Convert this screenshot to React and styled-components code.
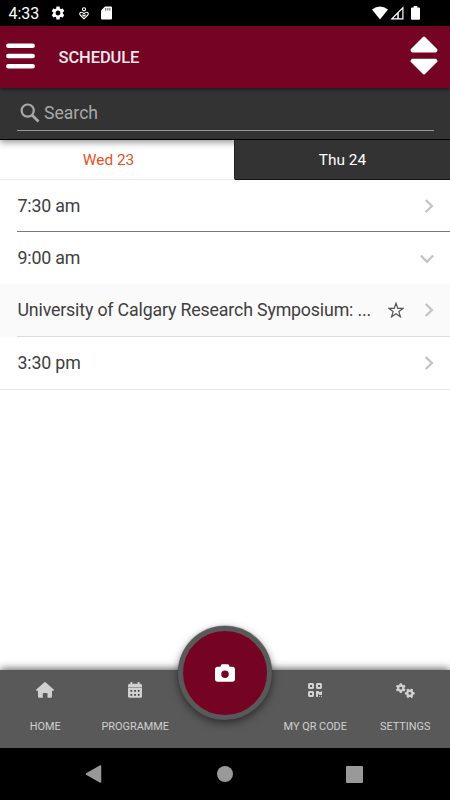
import React from 'react';
import styled, { createGlobalStyle, css } from 'styled-components';
import { FaQrcode, FaGears, FaCamera } from 'react-icons/fa6';
import { MdSettings } from 'react-icons/md';

const GlobalStyle = createGlobalStyle`
    * {
        box-sizing: border-box;
    }
    body {
        margin: 0;
        background-color: white;
        font-family: Roboto, sans-serif;
    }
    svg {
        display: block;
        flex-shrink: 0;
    }
`
const Screen = styled.div`
    width: 450px;
    height: 800px;
    display: flex;
    flex-direction: column;
    overflow: hidden;
    background-color: white;
`
const StatusBar = styled.div`
    height: 26px;
    flex-shrink: 0;
    display: flex;
    align-items: center;
    padding: 0 30px 0 8.5px;
    background-color: black;
    color: white;
`
const Clock = styled.span`
    width: 41.5px;
    font-size: 16px;
    line-height: 26px;
    padding-top: 1px;
`
const StatusIcons = styled.div`
    display: flex;
    align-items: center;
    gap: ${(props) => props.$gap}px;
    margin-left: ${(props) => (props.$end ? 'auto' : '0')};
`
const Header = styled.header`
    position: relative;
    z-index: 3;
    height: 62px;
    flex-shrink: 0;
    display: flex;
    align-items: center;
    padding: 0 12.5px 2px 6px;
    background-color: #750324;
    box-shadow: 0 1px 4px rgba(0, 0, 0, 0.6);
`
const Title = styled.h1`
    flex: 1;
    margin: 2px 0 0 23.5px;
    font-size: 16.5px;
    font-weight: 500;
    letter-spacing: -0.1px;
    color: #f3e8eb;
`
const SearchBar = styled.div`
    position: relative;
    z-index: 2;
    height: 52px;
    flex-shrink: 0;
    padding: 8px 16px 0 17px;
    background-color: #333333;
    border-bottom: 1px solid black;
    box-shadow: 0 2px 7px rgba(0, 0, 0, 0.45);
`
const SearchField = styled.div`
    height: 35px;
    display: flex;
    align-items: center;
    gap: 4px;
    padding: 0 0 1px 3px;
    border-bottom: 1px solid #999999;
    font-size: 17.6px;
    color: #a9a9a9;
`
const Tabs = styled.div`
    height: 40px;
    flex-shrink: 0;
    display: flex;
    border-bottom: 1px solid #ededed;
`
const Tab = styled.div`
    height: 40px;
    display: flex;
    align-items: center;
    justify-content: center;
    font-size: 15.4px;
    ${(props) => props.$active ? css`
        position: relative;
        z-index: 2;
        flex: 1;
        background-color: #333333;
        border-bottom: 1px solid #111111;
        border-left: 1px solid #222222;
        border-radius: 0 0 0 2px;
        color: white;
    ` : css`
        width: 234px;
        padding-right: 17px;
        color: #e9501f;
    `}
`
const List = styled.div`
    flex: 1;
`
const Row = styled.div`
    height: ${(props) => props.$height}px;
    padding-left: 17px;
    background-color: ${(props) => (props.$shaded ? '#fafafa' : 'white')};
    border-bottom: ${(props) => (props.$last ? '1px solid #e6e6e6' : 'none')};
`
const RowInner = styled.div`
    height: 100%;
    display: flex;
    align-items: center;
    padding-right: ${(props) => (props.$open ? 15 : 16)}px;
    border-bottom: ${(props) => (props.$line ? `1px solid ${props.$line}` : 'none')};
`
const RowText = styled.span`
    flex: 1;
    padding: 0 0 1px 0.5px;
    white-space: nowrap;
    font-size: 17.8px;
    letter-spacing: -0.17px;
    color: #404040;
`
const StarSlot = styled.span`
    margin-right: 20px;
`
const Footer = styled.nav`
    position: relative;
    height: 78px;
    flex-shrink: 0;
    display: grid;
    grid-template-columns: repeat(5, 90px);
    background-color: #595959;
    box-shadow: 0 -1px 8px rgba(0, 0, 0, 0.65);
`
const FooterItem = styled.div`
    display: flex;
    flex-direction: column;
    align-items: center;
    padding: 11px 0 0 0;
    color: #d0d0d0;
`
const FooterIcon = styled.div`
    height: 18px;
    display: flex;
    align-items: center;
`
const FooterLabel = styled.span`
    margin-top: 21px;
    padding-left: 0.5px;
    font-size: 10.9px;
    line-height: 14px;
    white-space: nowrap;
`
const CameraButton = styled.div`
    position: absolute;
    left: 178px;
    top: -44px;
    width: 94px;
    height: 94px;
    display: flex;
    align-items: center;
    justify-content: center;
    border: 5px solid #595959;
    border-radius: 50%;
    background-color: #750324;
    color: white;
    box-shadow: 0 3px 9px rgba(0, 0, 0, 0.5), 0 -0.5px 1px rgba(0, 0, 0, 0.4);
`
const SystemNav = styled.div`
    position: relative;
    height: 52px;
    flex-shrink: 0;
    display: flex;
    justify-content: space-between;
    align-items: center;
    padding: 0 87px 0 85px;
    background-color: black;
`

const CareIcon = () => (
    <svg width="10" height="13" viewBox="0 0 10 13" fill="none" stroke="white" strokeWidth="1.1">
        <circle cx="5" cy="2.3" r="1.6" />
        <path d="M5 11.8 1.2 8C.1 6.800 1 5.200 2.400 5.300 3.700 5.300 4.300 6 5 6.900c.7-.9 1.300-1.600 2.600-1.600 1.400-.1 2.300 1.500 1.200 2.700z" />
        <path d="M3.300 7.600 5 9.300l1.700-1.700" />
    </svg>
)

const SdCardIcon = () => (
    <svg width="11" height="14" viewBox="0 0 11 14">
        <path d="M4 .5h6q1 0 1 1v11q0 1-1 1H1q-1 0-1-1V4.500z" fill="white" />
        <path d="M4.700 2v2.600M6.800 2v2.600M8.900 2v2.600" stroke="#555555" strokeWidth="1" />
    </svg>
)

const WifiIcon = () => (
    <svg width="16" height="14" viewBox="0 0 16 14">
        <path d="M0 3.600Q8-2.800 16 3.600L8 13.500z" fill="white" />
    </svg>
)

const SignalIcon = () => (
    <svg width="14" height="14" viewBox="0 0 14 14">
        <path d="M13.500.3v13.200H.3z" fill="white" />
        <path d="M7.300 8.300v4H3.300z" fill="black" />
        <path d="M8.800 6.800 12.300 3.300v9H8.800z" fill="black" />
    </svg>
)

const BatteryIcon = () => (
    <svg width="9" height="14" viewBox="0 0 9 14">
        <path d="M2.700 0h3.600v1.600H8q1 0 1 1v10.200q0 1-1 1H1q-1 0-1-1V2.600q0-1 1-1h1.700z" fill="white" />
    </svg>
)

const MenuIcon = () => (
    <svg width="29" height="26" viewBox="0 0 29 26" stroke="white" strokeWidth="4.400" strokeLinecap="round">
        <path d="M2.300 2.700h24.400M2.300 13h24.400M2.300 23.300h24.400" />
    </svg>
)

const SortIcon = () => (
    <svg width="28" height="40" viewBox="0 0 28 40" fill="white" stroke="white" strokeWidth="3" strokeLinejoin="round">
        <path d="M14 2 26 14 25.500 15H2.500L2 14z" />
        <path d="M14 37 26 25 25.500 24.200H2.500L2 25z" />
    </svg>
)

const SearchIcon = () => (
    <svg width="20" height="20" viewBox="0 0 20 20" fill="none" stroke="#a9a9a9">
        <circle cx="7.700" cy="7.600" r="6.100" strokeWidth="2.200" />
        <path d="m12.200 12.200 6.300 6.300" strokeWidth="2.700" />
    </svg>
)

const ChevronRight = () => (
    <svg width="10" height="16" viewBox="0 0 10 16" fill="none" stroke="#c4c4c8" strokeWidth="2.400">
        <path d="m1.700 2 6.200 6-6.200 6" />
    </svg>
)

const ChevronDown = () => (
    <svg width="16" height="16" viewBox="0 0 16 16" fill="none" stroke="#c4c4c8" strokeWidth="2.400">
        <path d="m1.800 5.500 6.200 6.300 6.200-6.300" />
    </svg>
)

const StarIcon = () => (
    <svg width="16" height="16" viewBox="0 0 16 16" fill="none" stroke="#555555" strokeWidth="1.200">
        <path d="m8 1.200 1.800 5.100h5.400l-4.300 3.300 1.500 5.200L8 11.700l-4.400 3.100 1.500-5.200L.8 6.300h5.400z" />
    </svg>
)

const HomeIcon = () => (
    <svg width="18" height="16" viewBox="0 0 18 16" fill="currentColor">
        <path d="M9 0q.5 0 .9.400l7.800 7.100q.5.500.2.900-.2.400-.7.400H16v5.700q0 1.200-1.200 1.200h-3.300v-4q0-.8-.8-.8H7.600q-.8 0-.8.800v4H3.200Q2 15.700 2 14.500V8.800H.8q-.5 0-.7-.4-.3-.4.200-.9L8.100.4Q8.500 0 9 0z" />
    </svg>
)

const CalendarIcon = () => (
    <svg width="14" height="16" viewBox="0 0 14 16">
        <path d="M2.500 0h1.800v1.800h5.400V0h1.800v1.800h.8Q14 1.800 14 3.500V5H0V3.500q0-1.700 1.700-1.700h.8z" fill="currentColor" />
        <path d="M0 6h14v8.200q0 1.600-1.700 1.600H1.700Q0 15.800 0 14.200z" fill="currentColor" />
        <path d="M2.500 8h1.700v1.700H2.500zM6.200 8h1.700v1.700H6.200zM9.800 8h1.700v1.700H9.800zM2.500 12h1.700v1.700H2.500zM6.200 12h1.700v1.700H6.200zM9.800 12h1.700v1.700H9.800z" fill="#404040" />
        <path d="M0 5h14v1H0z" fill="#999999" />
    </svg>
)

const rows = [
    { text: '7:30 am', height: 52, line: '#777777' },
    { text: '9:00 am', height: 52, open: true },
    { text: 'University of Calgary Research Symposium: ...', height: 53, line: '#dedede', shaded: true, star: true },
    { text: '3:30 pm', height: 53, last: true },
];

const App = () => {
    return (
        <>
            <GlobalStyle />
            <Screen>
                <StatusBar>
                    <Clock>4:33</Clock>
                    <StatusIcons $gap={12.5}>
                        <MdSettings size={16} />
                        <CareIcon />
                        <SdCardIcon />
                    </StatusIcons>
                    <StatusIcons $end $gap={7.5}>
                        <StatusIcons $gap={2}>
                            <WifiIcon />
                            <SignalIcon />
                        </StatusIcons>
                        <BatteryIcon />
                    </StatusIcons>
                </StatusBar>
                <Header>
                    <MenuIcon />
                    <Title>SCHEDULE</Title>
                    <SortIcon />
                </Header>
                <SearchBar>
                    <SearchField>
                        <SearchIcon />
                        <span>Search</span>
                    </SearchField>
                </SearchBar>
                <Tabs>
                    <Tab>Wed 23</Tab>
                    <Tab $active>Thu 24</Tab>
                </Tabs>
                <List>
                    {rows.map((row) => (
                        <Row key={row.text} $height={row.height} $shaded={row.shaded} $last={row.last}>
                            <RowInner $line={row.line} $open={row.open}>
                                <RowText>{row.text}</RowText>
                                {row.star && <StarSlot><StarIcon /></StarSlot>}
                                {row.open ? <ChevronDown /> : <ChevronRight />}
                            </RowInner>
                        </Row>
                    ))}
                </List>
                <Footer>
                    <FooterItem>
                        <FooterIcon><HomeIcon /></FooterIcon>
                        <FooterLabel>HOME</FooterLabel>
                    </FooterItem>
                    <FooterItem>
                        <FooterIcon><CalendarIcon /></FooterIcon>
                        <FooterLabel>PROGRAMME</FooterLabel>
                    </FooterItem>
                    <span />
                    <FooterItem>
                        <FooterIcon><FaQrcode size={16} /></FooterIcon>
                        <FooterLabel>MY QR CODE</FooterLabel>
                    </FooterItem>
                    <FooterItem>
                        <FooterIcon><FaGears size={19} /></FooterIcon>
                        <FooterLabel>SETTINGS</FooterLabel>
                    </FooterItem>
                    <CameraButton>
                        <FaCamera size={20} />
                    </CameraButton>
                </Footer>
                <SystemNav>
                    <svg width="17" height="18" viewBox="0 0 17 18">
                        <path d="M15.500 1v16L1.500 9z" fill="#999999" stroke="#999999" strokeWidth="1.500" strokeLinejoin="round" />
                    </svg>
                    <svg width="18" height="16" viewBox="0 0 18 16">
                        <circle cx="10" cy="8" r="8" fill="#999999" />
                    </svg>
                    <svg width="17" height="17" viewBox="0 0 17 17">
                        <rect width="17" height="17" rx="1" fill="#999999" />
                    </svg>
                </SystemNav>
            </Screen>
        </>
    )
}

export default App
